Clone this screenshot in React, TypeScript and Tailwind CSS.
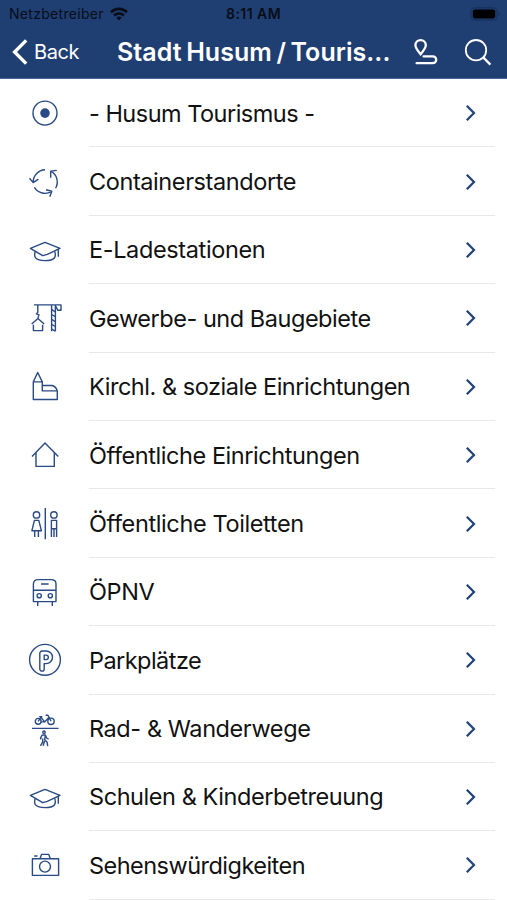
import type { ReactNode } from 'react';

interface Category {
  label: string;
  icon: ReactNode;
  // label tracking, keeps the widths close to the system font
  tracking: string;
}

const graduationCap = (
  <>
    <path d="M3.4 16.3 18 10.4l15 5.9-12.7 6.1-4.6 1.3L3.4 16.3Z" />
    <path d="M8.3 19.2c-1.8 5.4-.6 9.4 9.7 9.4s11.4-4 9.7-9.2M31.3 17.2v7.6" />
  </>
);

const categories: Category[] = [
  {
    label: '- Husum Tourismus -',
    tracking: 'tracking-[-0.51px]',
    icon: (
      <>
        <circle cx="18" cy="18.1" r="12" />
        <circle cx="18" cy="18.1" r="4.8" fill="currentColor" stroke="none" />
      </>
    ),
  },
  {
    label: 'Containerstandorte',
    tracking: 'tracking-[-0.41px]',
    icon: (
      <>
        <path d="M18 5.8A12.3 12.3 0 0 0 6.2 18.5M2.5 14.3l3.7 4.3 5.2-3.5" />
        <path d="M7.4 23.4a12.3 12.3 0 0 0 17.2 4M19 25.8l5.8 1.4-2 5.6" />
        <path d="M28.6 24.2a12.3 12.3 0 0 0-4.8-17M29.8 6.4l-6.1.7v6.6" />
      </>
    ),
  },
  { label: 'E-Ladestationen', tracking: 'tracking-[-0.37px]', icon: graduationCap },
  {
    label: 'Gewerbe- und Baugebiete',
    tracking: 'tracking-[-0.46px]',
    icon: (
      <>
        <path d="M7 4.9h27v5.4h-3.2l-2-4M24.6 4.9v26.4M28.4 4.9v26.4" />
        <path d="m24.6 9.6 3.8 2.2M24.6 14.5l3.8 2.2M24.6 19.4l3.8 2.2M24.6 24.3l3.8 2.2M24.6 29.2l3.8 2" />
        <path d="M10.8 4.9v7.4l-1.4 1.6 2.6 1-1.2 3.6M4.7 24l6.2-5.5 6.3 5.5M6.4 24.8v5.8h9.2v-5.8" />
      </>
    ),
  },
  {
    label: 'Kirchl. & soziale Einrichtungen',
    tracking: 'tracking-[-0.47px]',
    icon: (
      <>
        <path d="M6.3 30.5V12.9l4.4-9.4 4.6 9.4v9h15v8.6h-24ZM6.3 12.9h9" />
        <path d="M15.3 16.5h9.8c2.4.7 4.4 2.6 5.2 5.4" />
      </>
    ),
  },
  {
    label: 'Öffentliche Einrichtungen',
    tracking: 'tracking-[-0.43px]',
    icon: <path d="M5 19.4 18 6l13.3 13.4M9 15.6v13.8h18.3V15.6" />,
  },
  {
    label: 'Öffentliche Toiletten',
    tracking: 'tracking-[-0.38px]',
    icon: (
      <>
        <circle cx="9.5" cy="8.9" r="3.2" />
        <path d="M7.4 14.4h4.4l2.6 10.3H4.9ZM7.7 24.7V31M11.4 24.7V31M18.3 2v31.3" />
        <circle cx="26.9" cy="8.9" r="3.2" />
        <path d="M24.4 31V14.4h5.2V31M27 23v8M24.4 22.8h5.2" />
      </>
    ),
  },
  {
    label: 'ÖPNV',
    tracking: 'tracking-[-0.4px]',
    icon: (
      <>
        <path d="M6.4 27.6V10c0-3 1.8-4.4 4.8-4.4h13c3 0 4.8 1.4 4.8 4.4v17.6ZM6.4 16.3H29M14 10h7.6M10.7 27.6v4.3M25.3 27.6v4.3" />
        <circle cx="12.2" cy="21.7" r="2.1" />
        <circle cx="23.3" cy="21.7" r="2.1" />
      </>
    ),
  },
  {
    label: 'Parkplätze',
    tracking: 'tracking-[-0.55px]',
    icon: (
      <>
        <circle cx="18" cy="17.8" r="15.4" />
        <path d="M12.8 26.9V11.2a2.2 2.2 0 0 1 2.2-2.2h4.2a6.3 6.3 0 0 1 0 12.6h-2v5.3a2.2 2.2 0 0 1-4.4 0Z" />
        <path d="M17.2 13.1h1.9a2.2 2.2 0 0 1 0 4.5h-1.9Z" />
      </>
    ),
  },
  {
    label: 'Rad- & Wanderwege',
    tracking: 'tracking-[-0.42px]',
    icon: (
      <>
        <circle cx="11.2" cy="10.3" r="2.9" />
        <circle cx="24" cy="10.3" r="3.2" />
        <path d="m11.2 10.3 2.7-4.2 3.7 4.8 4-4.2M17.6 10.9h-3.8M24 10.3l-3-6h-2.4M12.3 5.6h3M5 17.4h26.5" />
        <circle cx="17" cy="21.2" r="1.2" />
        <path d="m15.3 23.9-1.8 3.2.7 1.3M15.3 23.9l3 .1 1.3 3 2 1.1M18.3 24.2l-.6 4.5 2.4 2.5.6 3.9M15.8 27.5l-.2 3.6-2.1 3.8M17.6 30l-1.5 4.7" />
      </>
    ),
  },
  { label: 'Schulen & Kinderbetreuung', tracking: 'tracking-[-0.43px]', icon: graduationCap },
  {
    label: 'Sehenswürdigkeiten',
    tracking: 'tracking-[-0.53px]',
    icon: (
      <>
        <path d="M5.4 11.8h26.2v16.6H5.4ZM13 11.8l1.5-4.4h7.3l1.5 4.4M7.2 9h3.3" />
        <circle cx="18" cy="19.6" r="5.5" />
      </>
    ),
  },
];

const StatusBar = () => (
  <div className="flex h-[27px] items-center justify-between pl-[9px] pr-[6px] text-[#080d18]">
    <div className="flex w-[160px] items-center gap-[6px]">
      <span className="w-[95px] whitespace-nowrap text-[14px] tracking-[0.3px]">Netzbetreiber</span>
      <svg width="18" height="14" viewBox="0 0 18 14" fill="none" stroke="currentColor" strokeWidth="2.6">
        <path d="M1 5.2a11.4 11.4 0 0 1 16 0M4.1 8.5a7 7 0 0 1 9.8 0" />
        <path d="m9 13.5-2.6-2.7a3.8 3.8 0 0 1 5.2 0Z" fill="currentColor" stroke="none" />
      </svg>
    </div>
    <span className="-ml-[3px] text-[14px] font-semibold tracking-[0.45px]">8:11 AM</span>
    <div className="flex w-[160px] justify-end">
      <svg width="31" height="14" viewBox="0 0 31 14">
        <rect x="1" y="0.8" width="26" height="12.4" rx="3.8" fill="none" stroke="#17315c" strokeWidth="1.2" />
        <rect x="2.8" y="2.6" width="22.4" height="8.8" rx="2" fill="#000" />
        <path d="M28.4 5v4c1.6-.6 1.6-3.4 0-4Z" fill="#17315c" />
      </svg>
    </div>
  </div>
);

const NavBar = () => (
  <div className="flex h-[50px] items-center pl-[12px] pr-[15px] text-white">
    <button className="flex w-[105px] items-center gap-[6px]">
      <svg width="16" height="26" viewBox="0 0 16 26" fill="none" stroke="currentColor" strokeWidth="3.4">
        <path d="M14.2 1.4 2.6 13l11.6 11.6" />
      </svg>
      <span className="text-[20px] tracking-[-0.4px]">Back</span>
    </button>
    <h1 className="w-[290px] whitespace-nowrap pt-[2px] text-[25px] font-semibold tracking-[0.05px] [word-spacing:-1.8px]">
      Stadt Husum / Touris...
    </h1>
    <button className="ml-[6px]">
      <svg width="26" height="28" viewBox="0 0 26 28" fill="none" stroke="currentColor" strokeWidth="2.3">
        <path d="M7.6 16.2C4.5 12.6 2.4 9.8 2.4 7.3a5.2 5.2 0 0 1 10.4 0c0 2.5-2.1 5.3-5.2 8.9Z" />
        <path d="M10.6 18.4h9.2a3.4 3.4 0 0 1 0 6.8H3.6" strokeLinecap="round" />
      </svg>
    </button>
    <button className="ml-auto">
      <svg width="28" height="28" viewBox="0 0 28 28" fill="none" stroke="currentColor" strokeWidth="1.8">
        <circle cx="12" cy="12.2" r="10.2" />
        <path d="m19.2 19.4 7.2 7.2" strokeWidth="2.2" />
      </svg>
    </button>
  </div>
);

const CategoryRow = ({ category }: { category: Category }) => (
  <li className="flex h-[68.4px] shrink-0 pl-[27px] pr-[12px]">
    <div className="flex w-[62px] items-center">
      <svg
        width="36"
        height="36"
        viewBox="0 0 36 36"
        className="text-[#294a84]"
        fill="none"
        stroke="currentColor"
        strokeWidth="1.4"
        strokeLinejoin="round"
      >
        {category.icon}
      </svg>
    </div>
    <div className="flex flex-1 items-center justify-between border-b border-[#e8e8e9] pr-[19px] pt-px">
      <span className={`whitespace-nowrap text-[23.5px] text-[#111] ${category.tracking}`}>{category.label}</span>
      <svg width="11" height="18" viewBox="0 0 11 18" fill="none" stroke="#204078" strokeWidth="2.2">
        <path d="m1.8 1.8 7.2 7.2-7.2 7.2" />
      </svg>
    </div>
  </li>
);

export default function App() {
  return (
    <div className="flex h-[900px] w-full flex-col overflow-hidden bg-white font-['Inter',sans-serif]">
      <header className="h-[79px] shrink-0 border-b border-[#4a669b] bg-[#1f3f73]">
        <StatusBar />
        <NavBar />
      </header>
      <ul className="flex flex-col">
        {categories.map((category) => (
          <CategoryRow key={category.label} category={category} />
        ))}
      </ul>
    </div>
  );
}
